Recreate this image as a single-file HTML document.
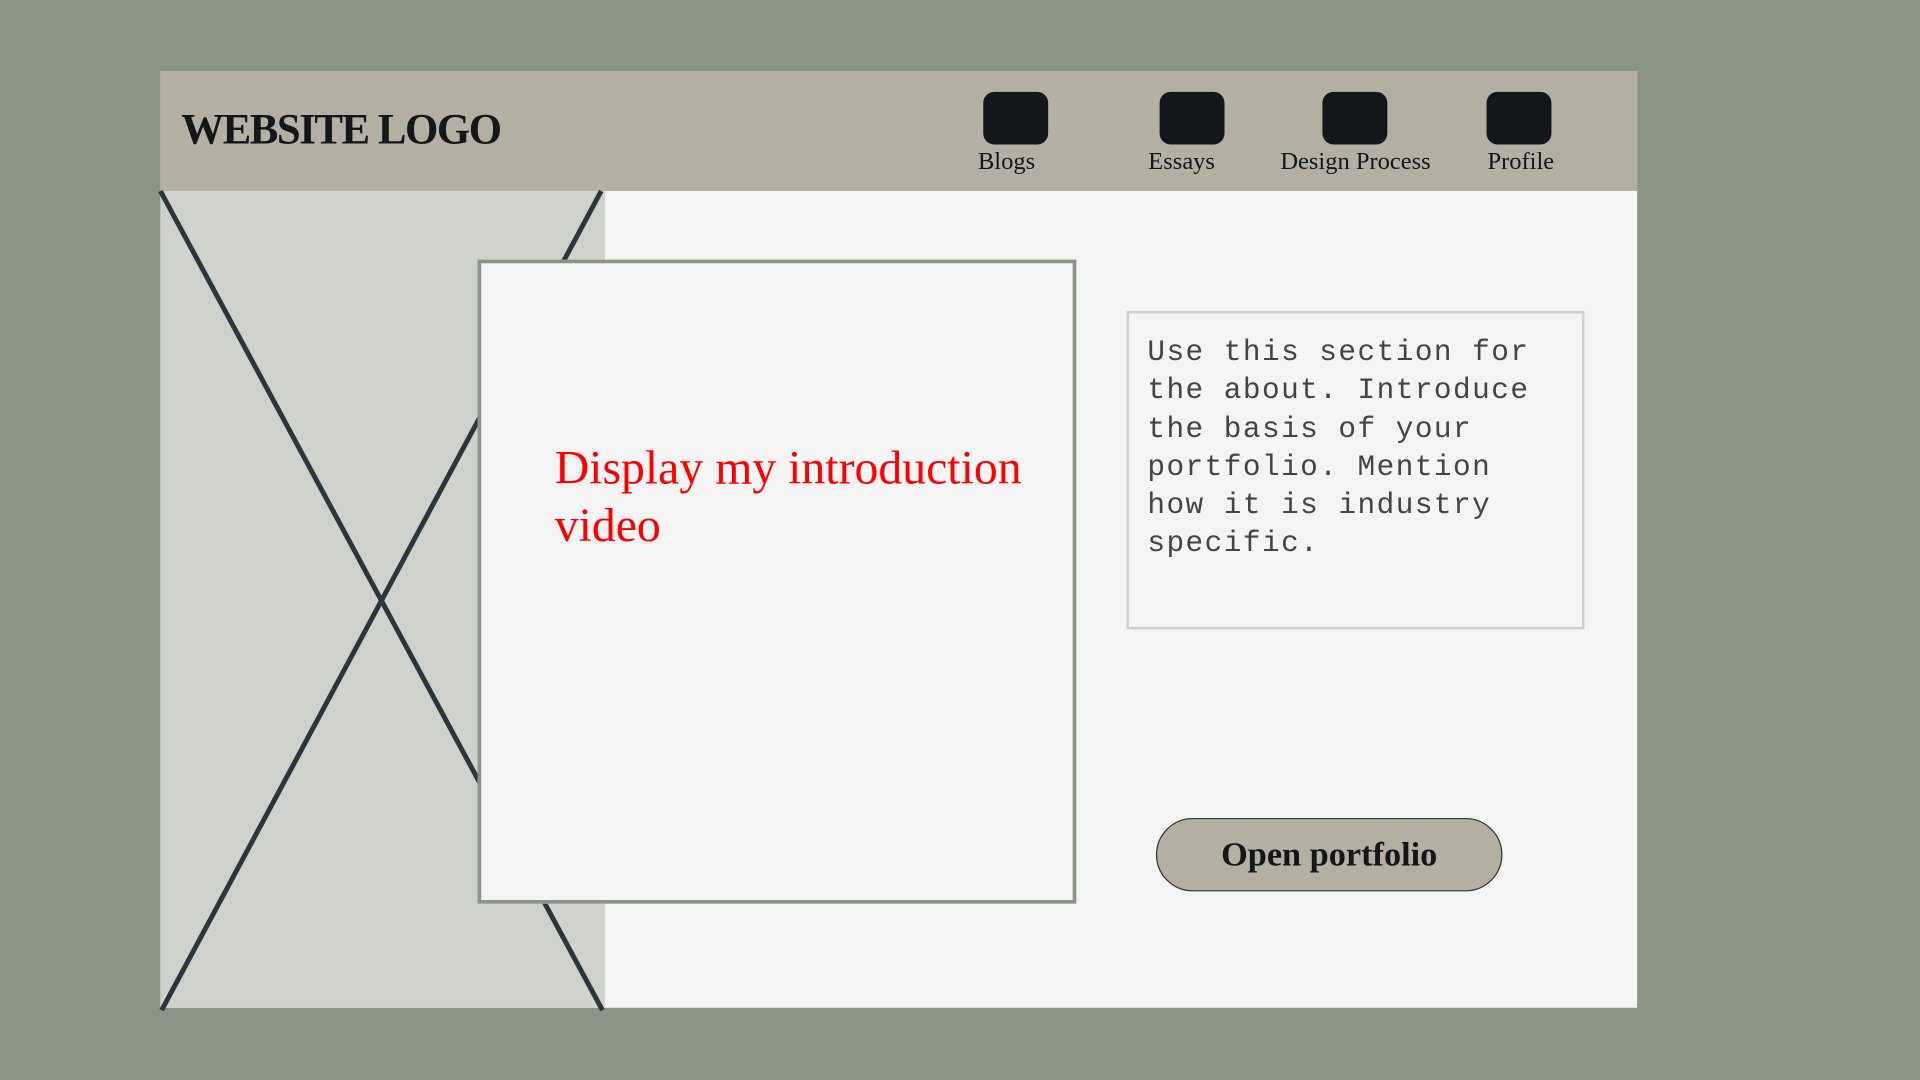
<!DOCTYPE html>
<html><head><style>
html,body{margin:0;padding:0;width:1920px;height:1080px;overflow:hidden;background:#8a9585;}
#s{position:absolute;left:0;top:0;width:1568px;height:882px;transform:scale(1.22449);transform-origin:0 0;}
.a{position:absolute;}
.ic{position:absolute;top:75px;width:53px;height:43px;background:#13171a;border-radius:9px;}
.lb{position:absolute;top:121px;font:20px "Liberation Serif",serif;color:#13171a;white-space:nowrap;transform:translateX(-50%);}
</style></head><body><div id="s">
<div class="a" style="left:131px;top:58px;width:1206px;height:765px;background:#f4f4f4;"></div>
<div class="a" style="left:131px;top:58px;width:1206px;height:98px;background:#b5aea3;"></div>
<div class="a" style="left:148px;top:86px;font:900 35px 'Liberation Serif',serif;color:#13171a;letter-spacing:-1.2px;">WEBSITE LOGO</div>
<div class="ic" style="left:803px"></div><div class="ic" style="left:947px"></div><div class="ic" style="left:1080px"></div><div class="ic" style="left:1214px"></div>
<div class="lb" style="left:822px">Blogs</div><div class="lb" style="left:965px">Essays</div><div class="lb" style="left:1107px">Design Process</div><div class="lb" style="left:1242px">Profile</div>
<div class="a" style="left:131px;top:156px;width:363px;height:667px;background:#cfd1cc;"></div>
<svg class="a" style="left:0;top:0" width="1568" height="882"><g stroke="#2b363c" stroke-width="4"><line x1="131" y1="156" x2="492" y2="825"/><line x1="491" y1="156" x2="132" y2="825"/></g></svg>
<div class="a" style="left:390px;top:212px;width:483px;height:520px;border:3px solid #8a9585;background:#f4f4f4;"></div>
<div class="a" style="left:453px;top:359px;width:410px;font:39px/47px 'Liberation Serif',serif;color:#ff0000;">Display my introduction video</div>
<div class="a" style="left:920px;top:254px;width:370px;height:256px;border:2px solid #cfcfcf;"></div>
<div class="a" style="left:937px;top:273px;width:325px;font:24px/31.3px 'Liberation Mono',monospace;letter-spacing:1.2px;color:#444;">Use this section for the about. Introduce the basis of your portfolio. Mention how it is industry specific.</div>
<div class="a" style="left:944px;top:668px;width:281px;height:58px;border:1.5px solid #333;border-radius:30px;background:#b5aea3;text-align:center;font:900 28px/60px 'Liberation Serif',serif;color:#13171a;">Open portfolio</div>
</div></body></html>
